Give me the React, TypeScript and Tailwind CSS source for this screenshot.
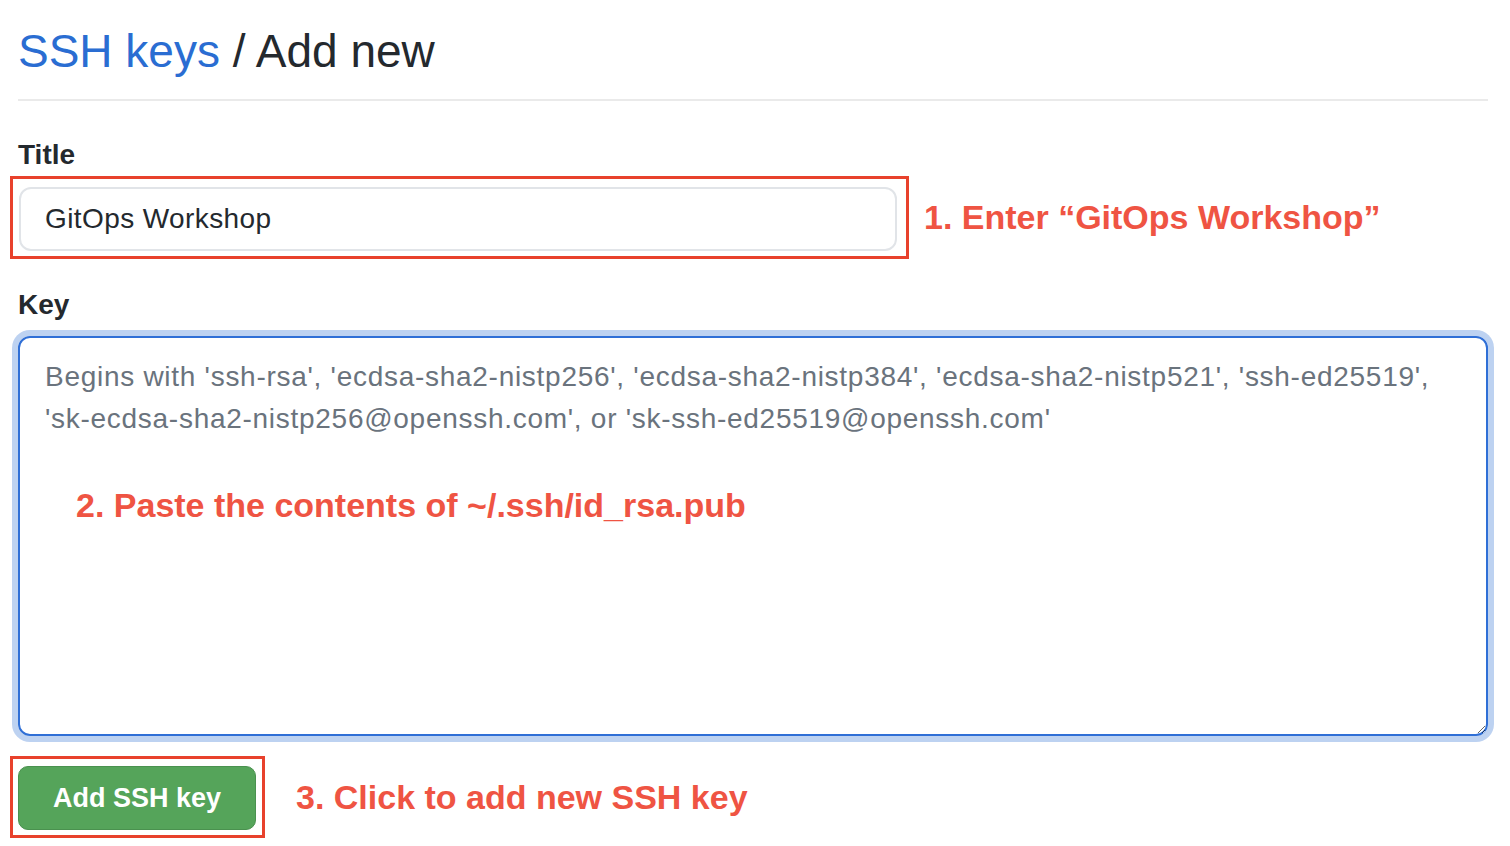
const font = { fontFamily: '"Liberation Sans", Arial, sans-serif' };

const placeholder =
  "Begins with 'ssh-rsa', 'ecdsa-sha2-nistp256', 'ecdsa-sha2-nistp384', 'ecdsa-sha2-nistp521', 'ssh-ed25519',\n'sk-ecdsa-sha2-nistp256@openssh.com', or 'sk-ssh-ed25519@openssh.com'";

export default function App() {
  return (
    <div className="w-[1510px] h-[846px] bg-white pl-[18px] pr-[22px] pt-[23px] overflow-hidden" style={font}>
      <h2 className="text-[46px] leading-[56px] pb-[20px] border-b-2 border-[#eaeaea] text-[#24292e]">
        <span className="text-[#2a6dd2]">SSH keys</span> / Add new
      </h2>

      <label className="block mt-[37px] mb-[4px] text-[28px] leading-[34px] font-bold text-[#24292e]">Title</label>
      <div className="flex items-center">
        <div className="-ml-[8px] border-[3px] border-[#e8412c] pt-[8px] pb-[5px] pl-[6px] pr-[9px]">
          <input
            readOnly
            value="GitOps Workshop"
            className="w-[878px] h-[64px] rounded-[12px] border-2 border-[#e1e4e8] bg-white pl-[24px] text-[28px] tracking-[0.4px] text-[#24292e] outline-none"
            style={font}
          />
        </div>
        <span className="ml-[15px] text-[34px] font-bold text-[#ef5443]">1. Enter “GitOps Workshop”</span>
      </div>

      <label className="block mt-[29px] text-[28px] leading-[34px] font-bold text-[#24292e]">Key</label>
      <div className="relative mt-[14px] w-[1470px]">
        <textarea
          placeholder={placeholder}
          className="block w-[1470px] h-[400px] rounded-[12px] border-2 border-[#2f6fd6] ring-[6px] ring-[#bdd2f1] pt-[18px] pl-[25px] pr-[10px] text-[28px] leading-[42px] tracking-[0.72px] text-[#24292e] placeholder:text-[#6a737d] outline-none"
          style={font}
        />
        <span className="absolute left-[58px] top-[152px] text-[34px] leading-[34px] font-bold text-[#ef5443] pointer-events-none">
          2. Paste the contents of ~/.ssh/id_rsa.pub
        </span>
      </div>

      <div className="flex items-center mt-[20px]">
        <div className="-ml-[8px] border-[3px] border-[#e8412c] pt-[7px] pb-[5px] pl-[5px] pr-[6px]">
          <button className="w-[238px] h-[64px] rounded-[10px] bg-[#55a45a] border border-[#4a914f] text-white text-[27px] font-bold">
            Add SSH key
          </button>
        </div>
        <span className="ml-[31px] text-[34px] font-bold text-[#ef5443]">3. Click to add new SSH key</span>
      </div>
    </div>
  );
}
